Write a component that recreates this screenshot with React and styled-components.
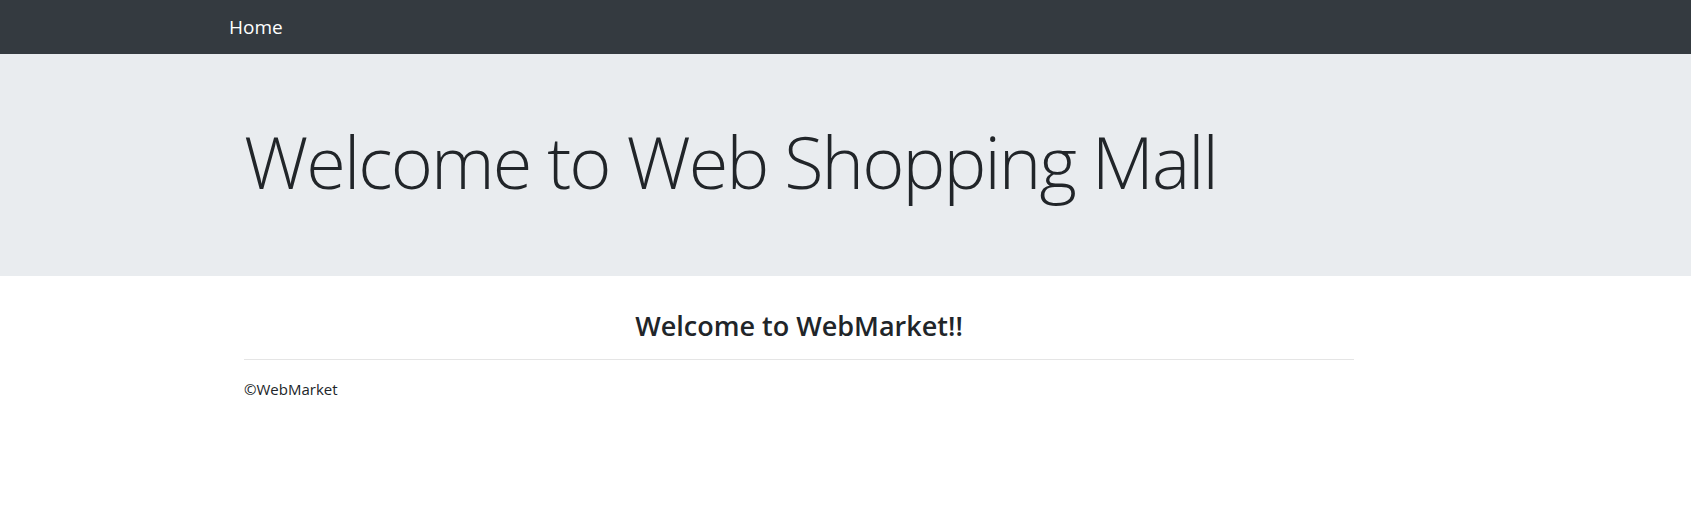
import React from "react";
import styled, { createGlobalStyle } from "styled-components";

const Global = createGlobalStyle`
  html, body { margin: 0; padding: 0; background: #fff; }
  body {
    font-family: "Open Sans", "Noto Sans", "Liberation Sans", sans-serif;
    font-size: 16px;
    line-height: 1.5;
    color: #212529;
  }
  * { box-sizing: border-box; }
`;

const Container = styled.div`
  width: 1140px;
  margin-left: 229px;
  padding: 0 ${(p) => (p.$flush ? 0 : 15)}px;
`;

const Navbar = styled.nav`
  background: #343a40;
  height: 54px;
  display: flex;
  align-items: center;
`;

const Brand = styled.a`
  color: #fff;
  font-size: 19px;
  line-height: 30px;
  text-decoration: none;
  display: inline-block;
  margin-top: -1px;
`;

const Jumbotron = styled.header`
  background: #e9ecef;
  padding: 64px 0;
  margin-bottom: 32px;
`;

const Display = styled.h1`
  margin: 0 0 8px;
  font-size: 72px;
  font-weight: 300;
  line-height: 1.2;
  letter-spacing: -1.9px;
`;

const Title = styled.h3`
  margin: 0 0 8px;
  padding-top: 2px;
  font-size: 27px;
  font-weight: 600;
  line-height: 1.2;
  text-align: center;
`;

const Rule = styled.hr`
  margin: 16px 0 17px;
  border: 0;
  border-top: 1px solid rgba(0, 0, 0, 0.1);
`;

const Footer = styled.footer`
  font-size: 15px;
  line-height: 24px;
`;

export default function App() {
  return (
    <>
      <Global />
      <Navbar>
        <Container $flush>
          <Brand href="#">Home</Brand>
        </Container>
      </Navbar>
      <Jumbotron>
        <Container>
          <Display>Welcome to Web Shopping Mall</Display>
        </Container>
      </Jumbotron>
      <Container>
        <Title>Welcome to WebMarket!!</Title>
        <Rule />
        <Footer>&copy;WebMarket</Footer>
      </Container>
    </>
  );
}
